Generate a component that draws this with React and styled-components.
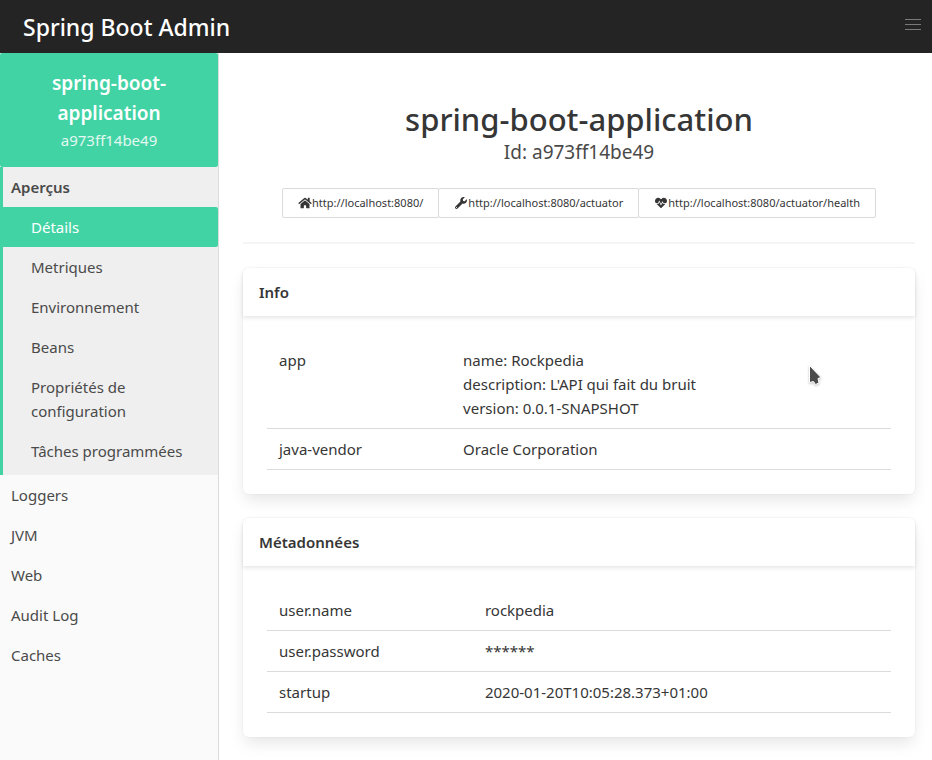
import React from "react";
import styled, { createGlobalStyle, css } from "styled-components";
import { FaHome, FaWrench, FaHeartbeat } from "react-icons/fa";

const GlobalStyle = createGlobalStyle`
  *, *::before, *::after { box-sizing: border-box; }
  body {
    margin: 0;
    background: #fff;
    color: #4a4a4a;
    font: 400 15px/24px "Noto Sans", "Open Sans", sans-serif;
  }
  h1, h2, p, ul { margin: 0; padding: 0; }
  ul { list-style: none; }
  a { color: inherit; text-decoration: none; }
`;

const Page = styled.div`
  display: flex;
  flex-direction: column;
  min-height: 100vh;
`;

const Navbar = styled.header`
  display: flex;
  align-items: center;
  justify-content: space-between;
  padding: 9px 11px 8px 23px;
  background: #242424;
`;

const Brand = styled.a`
  color: #fff;
  font-size: 23px;
  font-weight: 500;
  line-height: 36px;
`;

const Burger = styled.button`
  display: flex;
  flex-direction: column;
  gap: 4px;
  padding: 0;
  margin-bottom: 5px;
  border: 0;
  background: none;
  span {
    width: 16px;
    height: 1px;
    background: #7a7a7a;
  }
`;

const Body = styled.div`
  display: flex;
  flex: 1;
`;

const Sidebar = styled.aside`
  flex: 0 0 219px;
  border-right: 1px solid #dbdbdb;
  background: #fafafa;
`;

const Instance = styled.a`
  display: block;
  padding: 15px 24px;
  border-radius: 2px;
  background: #42d3a5;
  color: #fff;
  text-align: center;
`;

const InstanceName = styled.span`
  display: block;
  font-size: 19px;
  font-weight: 600;
  line-height: 30px;
`;

const InstanceId = styled.span`
  display: block;
  color: #e3f8f1;
`;

const Group = styled.li`
  ${(p) =>
    p.$open &&
    css`
      padding-bottom: 4px;
      border-left: 3px solid #42d3a5;
      background: #efefef;
    `}
`;

const GroupLink = styled.a`
  display: block;
  padding: 8px 8px 8px ${(p) => (p.$open ? "8px" : "11px")};
  font-weight: ${(p) => (p.$open ? 600 : 400)};
`;

const SubLink = styled.a`
  display: block;
  padding: 8px 12px 8px 28px;
  ${(p) =>
    p.$active &&
    css`
      border-radius: 0 2px 2px 0;
      background: #42d3a5;
      color: #fff;
    `}
`;

const Main = styled.main`
  flex: 1;
  min-width: 0;
  padding: 48px 17px 23px 24px;
`;

const Hero = styled.section`
  display: flex;
  flex-direction: column;
  align-items: center;
  padding-bottom: 24px;
  border-bottom: 2px solid #f5f5f5;
`;

const Title = styled.h1`
  color: #363636;
  font-size: 31px;
  font-weight: 500;
  line-height: 36px;
`;

const Subtitle = styled.p`
  font-size: 19px;
  line-height: 30px;
`;

const Endpoints = styled.div`
  display: flex;
  flex-wrap: wrap;
  justify-content: center;
  margin-top: 21px;
`;

const EndpointLink = styled.a`
  display: flex;
  align-items: center;
  height: 30px;
  padding: 0 15px;
  border: 1px solid #dbdbdb;
  border-radius: 2px;
  color: #363636;
  font-size: 11px;
  & + & { margin-left: -1px; }
  svg { width: 14px; height: 12px; }
`;

const Card = styled.section`
  margin-top: 24px;
  border-radius: 6px;
  background: #fff;
  box-shadow: 0 8px 16px -2px rgba(10, 10, 10, 0.1), 0 0 0 1px rgba(10, 10, 10, 0.02);
`;

const CardTitle = styled.h2`
  padding: 12px 16px;
  border-radius: 6px 6px 0 0;
  box-shadow: 0 2px 4px rgba(10, 10, 10, 0.1);
  color: #363636;
  font-size: 15px;
  font-weight: 600;
`;

const CardBody = styled.div`
  padding: 24px;
`;

const Table = styled.table`
  width: 100%;
  border-spacing: 0;
  table-layout: fixed;
  color: #363636;
  th {
    width: ${(p) => p.$keyWidth};
    font-weight: 400;
    text-align: left;
  }
  th, td {
    padding: 8px 12px;
    border-bottom: 1px solid #dbdbdb;
    vertical-align: top;
  }
`;

const Pointer = styled.svg`
  position: absolute;
  left: 808px;
  top: 364px;
  width: 15px;
  height: 23px;
  pointer-events: none;
  filter: drop-shadow(0 1px 1px rgba(0, 0, 0, 0.25));
`;

const overview = [
  "Détails",
  "Metriques",
  "Environnement",
  "Beans",
  "Propriétés de configuration",
  "Tâches programmées",
];
const groups = ["Loggers", "JVM", "Web", "Audit Log", "Caches"];

const endpoints = [
  { icon: FaHome, url: "http://localhost:8080/" },
  { icon: FaWrench, url: "http://localhost:8080/actuator" },
  { icon: FaHeartbeat, url: "http://localhost:8080/actuator/health" },
];

const info = [
  ["app", ["name: Rockpedia", "description: L'API qui fait du bruit", "version: 0.0.1-SNAPSHOT"]],
  ["java-vendor", ["Oracle Corporation"]],
];
const metadata = [
  ["user.name", ["rockpedia"]],
  ["user.password", ["******"]],
  ["startup", ["2020-01-20T10:05:28.373+01:00"]],
];

function Panel({ title, rows, keyWidth }) {
  return (
    <Card>
      <CardTitle>{title}</CardTitle>
      <CardBody>
        <Table $keyWidth={keyWidth}>
          <tbody>
            {rows.map(([key, lines]) => (
              <tr key={key}>
                <th scope="row">{key}</th>
                <td>
                  {lines.map((line) => (
                    <div key={line}>{line}</div>
                  ))}
                </td>
              </tr>
            ))}
          </tbody>
        </Table>
      </CardBody>
    </Card>
  );
}

export default function App() {
  return (
    <Page>
      <GlobalStyle />
      <Navbar>
        <Brand href="#">Spring Boot Admin</Brand>
        <Burger aria-label="Menu">
          <span />
          <span />
          <span />
        </Burger>
      </Navbar>
      <Body>
        <Sidebar>
          <Instance href="#">
            <InstanceName>spring-boot-application</InstanceName>
            <InstanceId>a973ff14be49</InstanceId>
          </Instance>
          <nav>
            <ul>
              <Group $open>
                <GroupLink href="#" $open>Aperçus</GroupLink>
                <ul>
                  {overview.map((label, i) => (
                    <li key={label}>
                      <SubLink href="#" $active={i === 0}>{label}</SubLink>
                    </li>
                  ))}
                </ul>
              </Group>
              {groups.map((label) => (
                <Group key={label}>
                  <GroupLink href="#">{label}</GroupLink>
                </Group>
              ))}
            </ul>
          </nav>
        </Sidebar>
        <Main>
          <Hero>
            <Title>spring-boot-application</Title>
            <Subtitle>Id: a973ff14be49</Subtitle>
            <Endpoints>
              {endpoints.map(({ icon: Icon, url }) => (
                <EndpointLink key={url} href={url}>
                  <Icon aria-hidden="true" />
                  <span>{url}</span>
                </EndpointLink>
              ))}
            </Endpoints>
          </Hero>
          <Panel title="Info" rows={info} keyWidth="29.5%" />
          <Panel title="Métadonnées" rows={metadata} keyWidth="33%" />
        </Main>
      </Body>
      <Pointer viewBox="0 0 15 23" aria-hidden="true">
        <path d="M1.5 1.5 L13 13.5 L10 14.5 L11 19 L7.5 20.5 L5.5 17.5 L1.5 18.5 Z" fill="#4a4a4a" stroke="#fff" strokeWidth="1" />
      </Pointer>
    </Page>
  );
}
